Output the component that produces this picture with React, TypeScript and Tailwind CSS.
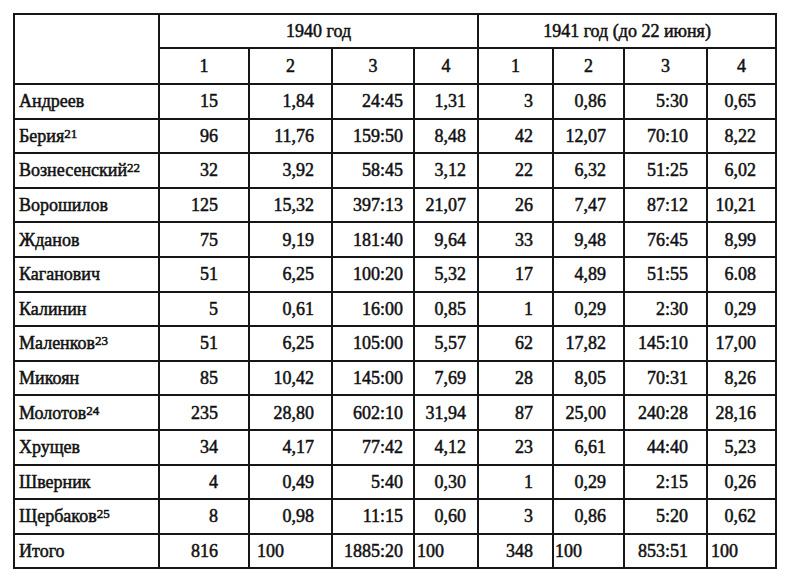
import React from "react";

type Row = [string, string | null, string, string, string, string, string, string, string, string];

const rows: Row[] = [
  ["Андреев", null, "15", "1,84", "24:45", "1,31", "3", "0,86", "5:30", "0,65"],
  ["Берия", "21", "96", "11,76", "159:50", "8,48", "42", "12,07", "70:10", "8,22"],
  ["Вознесенский", "22", "32", "3,92", "58:45", "3,12", "22", "6,32", "51:25", "6,02"],
  ["Ворошилов", null, "125", "15,32", "397:13", "21,07", "26", "7,47", "87:12", "10,21"],
  ["Жданов", null, "75", "9,19", "181:40", "9,64", "33", "9,48", "76:45", "8,99"],
  ["Каганович", null, "51", "6,25", "100:20", "5,32", "17", "4,89", "51:55", "6.08"],
  ["Калинин", null, "5", "0,61", "16:00", "0,85", "1", "0,29", "2:30", "0,29"],
  ["Маленков", "23", "51", "6,25", "105:00", "5,57", "62", "17,82", "145:10", "17,00"],
  ["Микоян", null, "85", "10,42", "145:00", "7,69", "28", "8,05", "70:31", "8,26"],
  ["Молотов", "24", "235", "28,80", "602:10", "31,94", "87", "25,00", "240:28", "28,16"],
  ["Хрущев", null, "34", "4,17", "77:42", "4,12", "23", "6,61", "44:40", "5,23"],
  ["Шверник", null, "4", "0,49", "5:40", "0,30", "1", "0,29", "2:15", "0,26"],
  ["Щербаков", "25", "8", "0,98", "11:15", "0,60", "3", "0,86", "5:20", "0,62"],
];

const numCls = [
  "text-right pr-[30px]",
  "text-right pr-[17px]",
  "text-right pr-[10px]",
  "text-right pr-[11px]",
  "text-right pr-[19px]",
  "text-right pr-[17px]",
  "text-right pr-[18px]",
  "text-right pr-[19px]",
];

const totalCls = [
  "text-right pr-[30px]",
  "text-left pl-[7px]",
  "text-right pr-[10px]",
  "text-left pl-[2px]",
  "text-right pr-[19px]",
  "text-left pl-[1px]",
  "text-right pr-[18px]",
  "text-left pl-[3px]",
];

const totals = ["816", "100", "1885:20", "100", "348", "100", "853:51", "100"];

const cell = "border-2 border-[#161616] p-0 align-middle";

export default function App() {
  return (
    <div className="w-[785px] h-[584px] bg-white overflow-hidden pt-[13px] pl-[13px] text-[#111] font-['Liberation_Serif',serif] text-[18px] leading-none [-webkit-text-stroke:0.5px_#111]">
      <table className="table-fixed border-collapse w-[762px]">
        <colgroup>
          <col className="w-[145px]" />
          <col className="w-[90px]" />
          <col className="w-[83px]" />
          <col className="w-[82px]" />
          <col className="w-[64px]" />
          <col className="w-[75px]" />
          <col className="w-[71px]" />
          <col className="w-[83px]" />
          <col className="w-[69px]" />
        </colgroup>
        <thead>
          <tr className="h-[34px]">
            <th rowSpan={2} className={cell}></th>
            <th colSpan={4} className={`${cell} font-normal text-center`}>1940 год</th>
            <th colSpan={4} className={`${cell} font-normal text-center`}>1941 год (до 22 июня)</th>
          </tr>
          <tr className="h-[36px]">
            {["1", "2", "3", "4", "1", "2", "3", "4"].map((h, i) => (
              <th key={i} className={`${cell} font-normal text-center`}>{h}</th>
            ))}
          </tr>
        </thead>
        <tbody>
          {rows.map((r) => (
            <tr key={r[0]} className="h-[34.6px]">
              <td className={`${cell} text-left pl-[4px] whitespace-nowrap`}>
                {r[0]}
                {r[1] && <sup className="text-[13px] relative top-[-4px]">{r[1]}</sup>}
              </td>
              {r.slice(2).map((v, i) => (
                <td key={i} className={`${cell} ${numCls[i]}`}>{v}</td>
              ))}
            </tr>
          ))}
          <tr className="h-[34.6px]">
            <td className={`${cell} text-left pl-[4px]`}>Итого</td>
            {totals.map((v, i) => (
              <td key={i} className={`${cell} ${totalCls[i]}`}>{v}</td>
            ))}
          </tr>
        </tbody>
      </table>
    </div>
  );
}
